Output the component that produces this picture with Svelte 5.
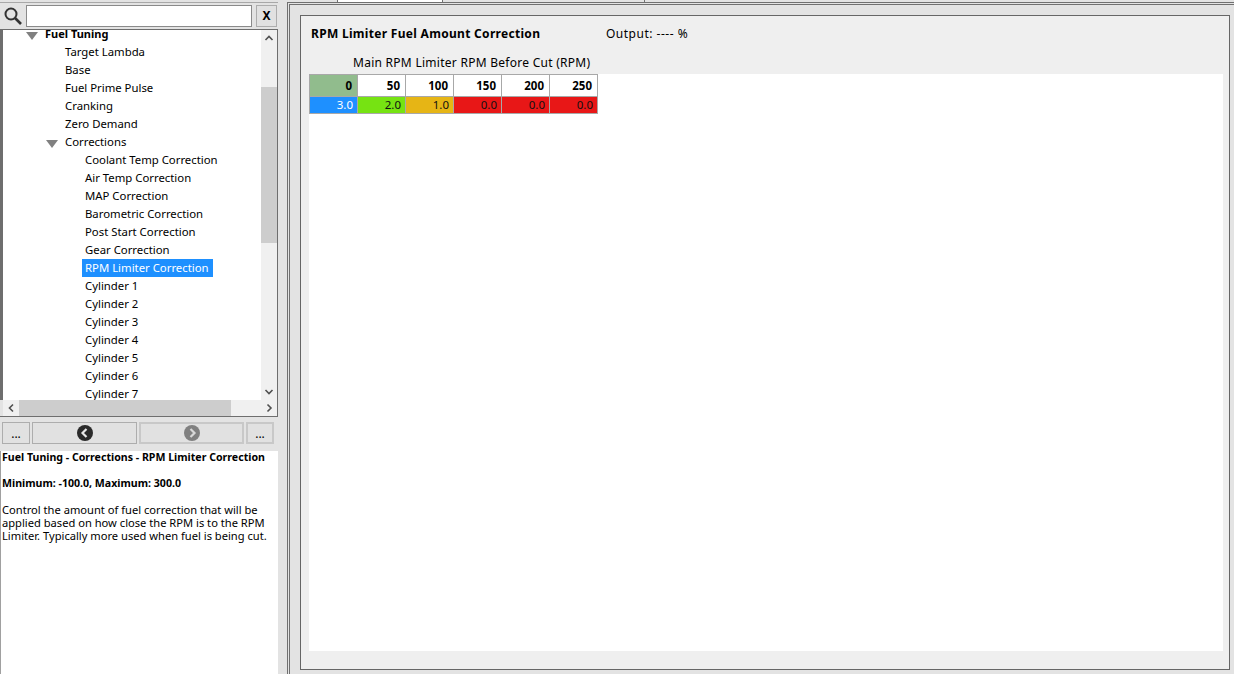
<script>
  const items = [
    { label: "Target Lambda", depth: 2 },
    { label: "Base", depth: 2 },
    { label: "Fuel Prime Pulse", depth: 2 },
    { label: "Cranking", depth: 2 },
    { label: "Zero Demand", depth: 2 },
    { label: "Corrections", depth: 2, open: true },
    { label: "Coolant Temp Correction", depth: 3 },
    { label: "Air Temp Correction", depth: 3 },
    { label: "MAP Correction", depth: 3 },
    { label: "Barometric Correction", depth: 3 },
    { label: "Post Start Correction", depth: 3 },
    { label: "Gear Correction", depth: 3 },
    { label: "RPM Limiter Correction", depth: 3, selected: true },
    { label: "Cylinder 1", depth: 3 },
    { label: "Cylinder 2", depth: 3 },
    { label: "Cylinder 3", depth: 3 },
    { label: "Cylinder 4", depth: 3 },
    { label: "Cylinder 5", depth: 3 },
    { label: "Cylinder 6", depth: 3 },
    { label: "Cylinder 7", depth: 3 }
  ];

  const axis = ["0", "50", "100", "150", "200", "250"];
  const values = [
    { v: "3.0", c: "blue" },
    { v: "2.0", c: "green" },
    { v: "1.0", c: "amber" },
    { v: "0.0", c: "red" },
    { v: "0.0", c: "red" },
    { v: "0.0", c: "red" }
  ];
</script>

<div class="app">
  <aside class="side">
    <div class="search">
      <svg class="glass" width="20" height="20" viewBox="0 0 20 20">
        <circle cx="8" cy="8" r="5.500" fill="none" stroke="#333" stroke-width="2" />
        <path d="M12 12l6 6" stroke="#333" stroke-width="2.600" fill="none" />
      </svg>
      <div class="field"></div>
      <div class="clear">X</div>
    </div>

    <div class="tree">
      <div class="tree-body">
        <div class="rows">
          <div class="row top">
            <span class="arrow a1"></span>
            <span class="lbl bold">Fuel Tuning</span>
          </div>
          {#each items as it}
            <div class="row d{it.depth}">
              {#if it.open}<span class="arrow a2"></span>{/if}
              <span class="lbl" class:selected={it.selected}>{it.label}</span>
            </div>
          {/each}
        </div>
        <div class="vbar">
          <svg width="16" height="17" viewBox="0 0 16 17"><path d="M4.500 10L8 6.500l3.500 3.500" fill="none" stroke="#505050" stroke-width="1.600" /></svg>
          <div class="vtrack"><div class="vthumb"></div></div>
          <svg width="16" height="17" viewBox="0 0 16 17"><path d="M4.500 7L8 10.500 11.500 7" fill="none" stroke="#505050" stroke-width="1.600" /></svg>
        </div>
      </div>
      <div class="hbar">
        <svg width="16" height="16" viewBox="0 0 16 16"><path d="M10 4.500L6.500 8l3.500 3.500" fill="none" stroke="#505050" stroke-width="1.600" /></svg>
        <div class="htrack"><div class="hthumb"></div></div>
        <svg width="16" height="16" viewBox="0 0 16 16"><path d="M6.500 4.500L10 8l-3.500 3.500" fill="none" stroke="#505050" stroke-width="1.600" /></svg>
      </div>
    </div>

    <div class="nav">
      <div class="btn small">...</div>
      <div class="btn wide">
        <svg width="18" height="18" viewBox="0 0 18 18">
          <circle cx="9" cy="9" r="8" fill="#2a2a2a" />
          <path d="M10.500 5L6.500 9l4 4" fill="none" stroke="#e8e8e8" stroke-width="2.200" />
        </svg>
      </div>
      <div class="btn wide off">
        <svg width="18" height="18" viewBox="0 0 18 18">
          <circle cx="9" cy="9" r="8" fill="#808080" />
          <path d="M7.500 5l4 4-4 4" fill="none" stroke="#d8d8d8" stroke-width="2.200" />
        </svg>
      </div>
      <div class="btn small off">...</div>
    </div>

    <div class="help">
      <p class="strong">Fuel Tuning - Corrections - RPM Limiter Correction</p>
      <p class="strong">Minimum: -100.0, Maximum: 300.0</p>
      <p>Control the amount of fuel correction that will be applied based on how close the RPM is to the RPM Limiter. Typically more used when fuel is being cut.</p>
    </div>
  </aside>

  <main class="main">
    <div class="tabs">
      <span class="tab first"></span>
      <span class="tab active"></span>
      <span class="tab mid"></span>
      <span class="tab last"></span>
    </div>
    <section class="page">
      <div class="inner">
        <div class="panel">
          <div class="head">
            <h1>RPM Limiter Fuel Amount Correction</h1>
            <span class="output">Output: ---- %</span>
          </div>
          <div class="axis-title">Main RPM Limiter RPM Before Cut (RPM)</div>
          <div class="sheet">
            <div class="table">
              {#each axis as a, i}
                <div class="hcell" class:corner={i === 0}>{a}</div>
              {/each}
              {#each values as cell}
                <div class="vcell {cell.c}">{cell.v}</div>
              {/each}
            </div>
          </div>
        </div>
      </div>
    </section>
  </main>
</div>

<style>
  :global(body) {
    margin: 0;
    background: #e3e3e3;
  }

  .app {
    display: flex;
    width: 1234px;
    height: 674px;
    overflow: hidden;
    font-family: "Noto Sans", sans-serif;
    font-size: 11.35px;
    color: #000;
    background: #e3e3e3;
  }

  .side {
    width: 278px;
    flex: none;
    display: flex;
    flex-direction: column;
  }

  .search {
    height: 27px;
    margin-top: 2px;
    box-sizing: border-box;
    display: flex;
    align-items: center;
    padding: 0 0 0 3px;
    border-top: 1px solid #a8a8a8;
  }

  .glass {
    flex: none;
    margin-right: 3px;
  }

  .field {
    width: 226px;
    height: 22px;
    box-sizing: border-box;
    border: 1px solid #8a8a8a;
    background: #fff;
  }

  .clear {
    width: 21px;
    height: 22px;
    margin-left: 4px;
    box-sizing: border-box;
    border: 1px solid #adadad;
    background: #e1e1e1;
    font-size: 12px;
    font-weight: 700;
    text-align: center;
    line-height: 20px;
  }

  .tree {
    height: 388px;
    box-sizing: border-box;
    border: 1px solid #6e6e6e;
    border-left: 0;
    display: flex;
    flex-direction: column;
  }

  .tree-body {
    flex: 1;
    min-height: 0;
    display: flex;
    border-left: 3px solid #6e6e6e;
  }

  .rows {
    flex: 1;
    background: #fff;
    overflow: hidden;
  }

  .row {
    height: 18px;
    position: relative;
    white-space: nowrap;
    line-height: 18px;
  }

  .row.top {
    height: 13px;
    line-height: 7px;
    overflow: hidden;
  }

  .row.top .lbl {
    margin-left: 42px;
    padding: 0;
    font-size: 11px;
  }

  .row.d2 .lbl {
    margin-left: 59px;
  }

  .row.d3 .lbl {
    margin-left: 79px;
  }

  .lbl {
    display: inline-block;
    padding: 0 4px 0 3px;
    height: 18px;
  }

  .lbl.bold {
    font-weight: 700;
  }

  .lbl.selected {
    background: #1e90ff;
    color: #fff;
  }

  .arrow {
    position: absolute;
    width: 0;
    height: 0;
    border-left: 6px solid transparent;
    border-right: 6px solid transparent;
    border-top: 8px solid #808080;
  }

  .a1 {
    left: 23px;
    top: 2px;
  }

  .a2 {
    left: 43px;
    top: 7px;
  }

  .vbar {
    width: 16px;
    flex: none;
    display: flex;
    flex-direction: column;
    background: #f0f0f0;
  }

  .vbar svg,
  .hbar svg {
    flex: none;
  }

  .vtrack {
    flex: 1;
    position: relative;
  }

  .vthumb {
    position: absolute;
    left: 0;
    right: 0;
    top: 40px;
    height: 156px;
    background: #cdcdcd;
  }

  .hbar {
    height: 16px;
    flex: none;
    display: flex;
    margin-left: 3px;
    background: #f0f0f0;
  }

  .htrack {
    flex: 1;
    position: relative;
  }

  .hthumb {
    position: absolute;
    top: 0;
    bottom: 0;
    left: 0;
    width: 212px;
    background: #cdcdcd;
  }

  .nav {
    height: 34px;
    box-sizing: border-box;
    padding: 5px 0 0 2px;
    display: flex;
    gap: 2px;
    font-size: 12px;
  }

  .btn {
    height: 22px;
    box-sizing: border-box;
    border: 1px solid #adadad;
    background: #e1e1e1;
    display: flex;
    align-items: center;
    justify-content: center;
  }

  .btn.small {
    width: 28px;
  }

  .btn.wide {
    width: 105px;
  }

  .btn.off {
    border: 2px solid #c8c8c8;
  }

  .help {
    flex: 1;
    background: #fff;
    padding: 0 0 0 1px;
    font-size: 11.15px;
    line-height: 13px;
    border-left: 1px solid #a0a0a0;
  }

  .help p {
    margin: 0 0 13px;
  }

  .strong {
    font-size: 10.6px;
    font-weight: 700;
    white-space: nowrap;
  }

  .main {
    flex: 1;
    min-width: 0;
    display: flex;
    flex-direction: column;
    padding-left: 9px;
  }

  .tabs {
    height: 2px;
    flex: none;
    display: flex;
  }

  .tab {
    box-sizing: border-box;
    border-right: 1px solid #707070;
  }

  .tab.first {
    width: 51px;
  }

  .tab.active {
    width: 105px;
    background: #fff;
  }

  .tab.mid {
    width: 202px;
  }

  .tab.last {
    flex: 1;
    border-right: 0;
  }

  .page {
    flex: 1;
    min-height: 0;
    display: flex;
    box-sizing: border-box;
    border-left: 1px solid #707070;
    border-top: 1px solid #707070;
    padding: 1px 0 0 1px;
  }

  .inner {
    flex: 1;
    min-width: 0;
    box-sizing: border-box;
    border-left: 1px solid #707070;
    border-top: 1px solid #707070;
    padding: 10px 4px 4px 10px;
  }

  .panel {
    height: 100%;
    box-sizing: border-box;
    border: 1px solid #666;
    background: #efefef;
    display: flex;
    flex-direction: column;
    padding: 0 6px 18px 8px;
  }

  .head {
    display: flex;
    align-items: center;
    height: 35px;
    flex: none;
    padding-left: 2px;
    font-size: 12px;
  }

  h1 {
    margin: 0;
    font-size: 12px;
    font-weight: 700;
    letter-spacing: 0.3px;
    width: 295px;
    flex: none;
    white-space: nowrap;
  }

  .output {
    white-space: nowrap;
    letter-spacing: 0.5px;
  }

  .axis-title {
    height: 23px;
    line-height: 24px;
    flex: none;
    padding-left: 44px;
    font-size: 12px;
    letter-spacing: 0.27px;
  }

  .sheet {
    flex: 1;
    background: #fff;
  }

  .table {
    display: grid;
    grid-template-columns: repeat(6, 48px);
    grid-template-rows: 22px 17px;
    width: max-content;
    border-left: 1px solid #a8a8a8;
    border-top: 1px solid #a8a8a8;
    font-size: 11.5px;
  }

  .hcell,
  .vcell {
    box-sizing: border-box;
    text-align: right;
    border-right: 1px solid #a8a8a8;
    border-bottom: 1px solid #a8a8a8;
  }

  .hcell {
    background: #fff;
    font-weight: 700;
    line-height: 21px;
    padding-right: 5px;
  }

  .hcell.corner {
    background: #91bc8d;
  }

  .vcell {
    line-height: 15px;
    padding-right: 4px;
    color: #111;
  }

  .blue {
    background: #1e90ff;
    color: #fff;
  }

  .green {
    background: #76e312;
  }

  .amber {
    background: #e6b515;
  }

  .red {
    background: #e81717;
  }
</style>
